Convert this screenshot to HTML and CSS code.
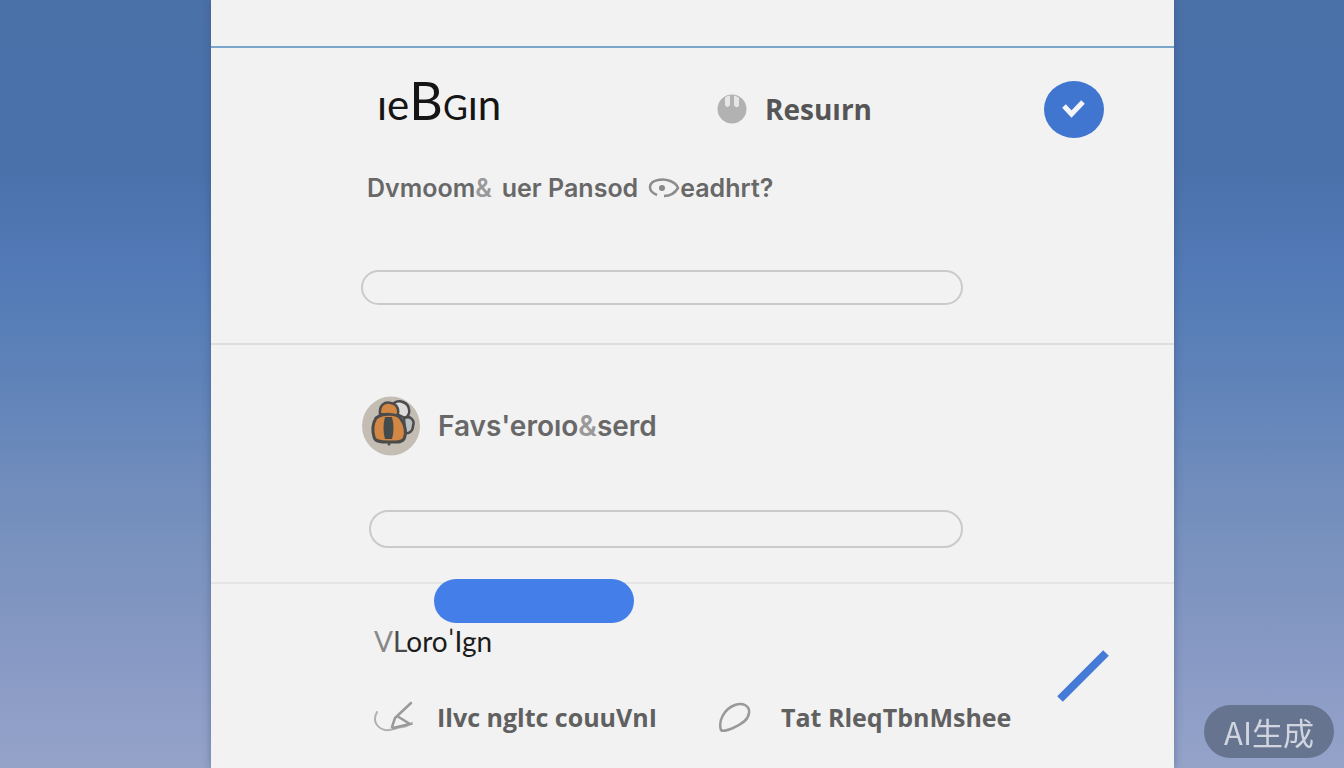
FILE: index.html
```html
<!DOCTYPE html>
<html lang="en">
<head>
  <meta charset="UTF-8">
  <meta name="viewport" content="width=device-width, initial-scale=1.0">
  <title>Login</title>
  <link rel="stylesheet" href="styles.css">
</head>
<body>
  <form class="card">
    <div class="topbar"></div>

    <section class="section section-account">
      <header class="header">
        <h1 class="logo">ıe<span class="logo-tall">B</span><span class="logo-small">G</span>ın</h1>
        <a href="#" class="resume">
          <svg width="30" height="30" viewBox="0 0 30 30" aria-hidden="true">
            <circle cx="15" cy="15" r="14.5" fill="#b2b2b2"/>
            <path d="M8 3.5Q10.500 1.500 13 1.500V11q-2.500 4-5 0z" fill="#e6e6e6"/>
            <path d="M17 1.500q3 .5 5 2.500v8q-3 3-5-1z" fill="#e6e6e6"/>
          </svg>
          Resuırn
        </a>
        <button type="button" class="confirm" aria-label="Confirm">
          <svg width="24" height="20" viewBox="0 0 24 20" aria-hidden="true">
            <path d="M2 7l7.500 8L21 3" fill="none" stroke="#f3f5fb" stroke-width="5"/>
          </svg>
        </button>
      </header>
      <label for="account" class="label label-account">
        <span>Dvmoom<span class="faded">&amp;</span></span>
        <span>uer Pansod</span>
        <span class="with-eye">
          <svg width="32" height="20" viewBox="0 0 32 20" aria-hidden="true">
            <path d="M9 17C-1 13 0 4 10 2c8-2 18 2 20 8-3 5-7 8-14 8" fill="none" stroke="#8c8c8c" stroke-width="2.500"/>
            <circle cx="14" cy="10" r="3" fill="#888"/>
          </svg>eadhrt?</span>
      </label>
      <input type="text" id="account" class="field">
    </section>

    <section class="section section-password">
      <div class="profile">
        <svg width="58" height="60" viewBox="0 0 58 60" aria-hidden="true">
          <ellipse cx="29" cy="30" rx="29" ry="29.500" fill="#c3bdb3"/>
          <path d="M32 7c6-4 14 0 15 6 1 4-1 8-4 9l-8-4z" fill="#dcdcda" stroke="#4b4b4b" stroke-width="2.500"/>
          <path d="M42 22c7-3 11 3 9 8 0 5-4 8-8 7z" fill="#b9bfc1" stroke="#4b4b4b" stroke-width="2.500"/>
          <path d="M18 18C17 9 23 5 29 7c6 1 9 7 6 13z" fill="#d28844" stroke="#4b4b4b" stroke-width="2.500"/>
          <path d="M14 22c7-5 21-5 25 1 4 5 6 14 3 20-3 4-7 3-12 3-7 0-17 1-18-5-2-7-1-14 2-19z" fill="#d28844" stroke="#4b4b4b" stroke-width="3"/>
          <path d="M23 21h7q3 11 0 22h-7q-3-11 0-22z" fill="#454a4c"/>
          <circle cx="27" cy="48" r="1.500" fill="#564c44"/>
        </svg>
        <label for="password" class="label label-password">Favs'eroıo<span class="faded">&amp;</span>serd</label>
      </div>
      <input type="password" id="password" class="field field-password">
    </section>

    <section class="section section-actions">
      <div class="actions">
        <button type="submit" class="submit" aria-label="Submit"></button>
        <h2 class="caption"><span class="caption-start">V</span><span class="caption-second">L</span>oroˈIgn</h2>
        <nav class="links">
          <a href="#" class="link link-edit">
            <svg width="44" height="34" viewBox="0 0 44 34" aria-hidden="true" fill="none" stroke-linecap="round">
              <path d="M4 12c-5 9 0 16 8 18 6 1 10-2 17-3 4 0 7-2 10-4" stroke="#b0b0b0" stroke-width="2"/>
              <path d="M38 3L22 18l-3 9M24 16l13 8-17 4" stroke="#999" stroke-width="2.500"/>
            </svg>
            Ilvc ngltc couuVnI
          </a>
          <a href="#" class="link link-help">
            <svg width="34" height="32" viewBox="0 0 34 32" aria-hidden="true">
              <path d="M4 29C1 20 7 8 18 4c8-3 15 1 14 8-1 8-9 12-16 15-5 2-10 4-12 2z" fill="none" stroke="#999" stroke-width="2.500"/>
            </svg>
            Tat RleqTbnMshee
          </a>
        </nav>
      </div>
      <svg class="slash" width="52" height="52" viewBox="0 0 52 52" aria-hidden="true">
        <path d="M3 49L49 3" stroke="#457bd6" stroke-width="8"/>
      </svg>
    </section>
  </form>
  <div class="badge" lang="zh">AI生成</div>
</body>
</html>
```
FILE: styles.css
```css
* {
  margin: 0;
  padding: 0;
  box-sizing: border-box;
}

body {
  font-family: Inter, sans-serif;
  display: grid;
  grid-template-columns: 211fr 963fr 170fr;
  min-height: 100vh;
  background: linear-gradient(#4b71a9 0%, #4b71ab 22%, #527ab6 35%, #6083b9 50%, #7690bd 68%, #8799c4 85%, #95a3c9 100%);
  color: #626262;
}

.card {
  grid-column: 2;
  display: flex;
  flex-direction: column;
  background-color: #f2f2f2;
  box-shadow: 0 0 8px rgba(50, 70, 110, 0.45);
}

.topbar {
  height: 48px;
  border-bottom: 2px solid #79a6ca;
}

.section {
  padding-left: 150px;
  padding-right: 70px;
}

.section-account {
  padding-top: 32px;
  padding-bottom: 38px;
  border-bottom: 2px solid #dedede;
}

.header {
  display: grid;
  grid-template-columns: 356fr 327fr 60px;
  grid-template-rows: 58px;
  align-items: center;
}

/* Wordmark with one oversized letter */
.logo {
  padding-left: 16px;
  padding-bottom: 12px;
  font-family: Lato, sans-serif;
  font-size: 42px;
  font-weight: 400;
  line-height: 48px;
  color: #151515;
}

.logo-tall {
  font-size: 52px;
}

.logo-small {
  font-size: 34px;
}

.resume {
  display: flex;
  align-items: center;
  gap: 18px;
  font-family: "Open Sans", sans-serif;
  font-size: 28px;
  font-weight: 700;
  color: #555;
  text-decoration: none;
}

.confirm {
  display: flex;
  justify-content: center;
  align-items: center;
  width: 60px;
  height: 57px;
  border: none;
  border-radius: 50%;
  background-color: #4176d0;
  cursor: pointer;
}

.label {
  font-size: 25px;
  font-weight: 600;
  line-height: 32px;
  color: #686868;
}

.label-account {
  display: flex;
  gap: 10px;
  padding-left: 6px;
  margin-top: 34px;
  margin-bottom: 66px;
}

.with-eye {
  display: flex;
  align-items: center;
}

.faded {
  color: #999;
}

.field {
  display: block;
  width: 81%;
  height: 35px;
  padding: 0 18px;
  border: 2px solid #cacaca;
  border-radius: 20px;
  background-color: transparent;
  font-family: Inter, sans-serif;
  font-size: 16px;
  outline: none;
}

.field:focus {
  border-color: #447ee8;
}

.section-password {
  padding-top: 51px;
  padding-bottom: 34px;
  border-bottom: 2px solid #e4e4e4;
}

.profile {
  display: flex;
  align-items: center;
  gap: 18px;
  padding-left: 1px;
  margin-bottom: 54px;
}

.label-password {
  font-size: 28px;
}

.field-password {
  width: 80%;
  height: 38px;
  margin-left: 8px;
}

.section-actions {
  flex: 1;
  display: flex;
  justify-content: space-between;
}

/* Sits on top of the divider above */
.submit {
  display: block;
  width: 200px;
  height: 44px;
  margin-top: -5px;
  margin-left: 73px;
  border: none;
  border-radius: 22px;
  background-color: #447ee8;
  cursor: pointer;
}

.caption {
  padding-left: 13px;
  font-family: Lato, sans-serif;
  font-size: 28px;
  font-weight: 400;
  line-height: 36px;
  color: #1c1c1c;
}

.caption-start {
  color: #888;
}

.caption-second {
  color: #4a4a4a;
}

.links {
  display: flex;
  gap: 60px;
  padding-left: 12px;
  margin-top: 40px;
}

.link {
  display: flex;
  align-items: center;
  gap: 20px;
  font-family: "Open Sans", sans-serif;
  font-size: 25px;
  font-weight: 700;
  line-height: 36px;
  color: #606060;
  text-decoration: none;
  white-space: nowrap;
}

.link-help {
  gap: 30px;
}

.slash {
  flex: none;
  margin-top: 66px;
  margin-right: -5px;
}

.badge {
  position: fixed;
  right: 10px;
  bottom: 10px;
  padding: 0 20px;
  border-radius: 27px;
  background-color: #66748f;
  font-family: "Noto Sans CJK SC", sans-serif;
  font-size: 31px;
  line-height: 53px;
  color: #d0d5df;
}

@media (max-width: 900px) {
  body {
    grid-template-columns: 16px 1fr 16px;
  }

  .section {
    padding-left: 24px;
    padding-right: 24px;
  }

  .links {
    flex-wrap: wrap;
  }
}
```
